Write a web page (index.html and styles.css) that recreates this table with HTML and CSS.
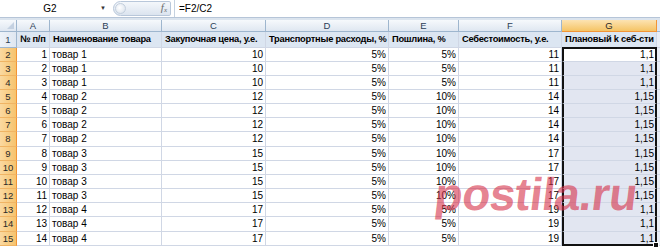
FILE: index.html
```html
<!DOCTYPE html>
<html>
<head>
<meta charset="utf-8">
<link rel="stylesheet" href="styles.css">
</head>
<body>
<div class="app">
  <div class="fbar">
    <div class="namebox">G2</div>
    <div class="ddarrow">▼</div>
    <div class="fxpill">
      <span class="knob"></span>
      <span class="fx"><i>f</i><sub>x</sub></span>
    </div>
    <div class="formula">=F2/C2</div>
  </div>
  <div class="band"></div>
  <div class="sheet">
    <div class="corner"><span class="tri"></span></div>
    <div class="ch">A</div><div class="ch">B</div><div class="ch">C</div><div class="ch">D</div><div class="ch">E</div><div class="ch">F</div><div class="ch ch-sel">G</div><div class="ch-end"></div>

    <div class="rh rh1">1</div>
    <div class="c hd">№ п/п</div><div class="c hd">Наименование товара</div><div class="c hd">Закупочная цена, у.е.</div><div class="c hd">Транспортные расходы, %</div><div class="c hd">Пошлина, %</div><div class="c hd">Себестоимость, у.е.</div><div class="c hd">Плановый k себ-сти</div><div class="c-end c-end1"></div>
  </div>
  <div class="sheet" id="rows"></div>
  <div class="watermark">postila.ru</div>
</div>
<script src="app.js"></script>
</body>
</html>
```
FILE: app.js
```js
const B = ["товар 1","товар 1","товар 1","товар 2","товар 2","товар 2","товар 2","товар 3","товар 3","товар 3","товар 3","товар 4","товар 4","товар 4"];
const C = [10,10,10,12,12,12,12,15,15,15,15,17,17,17];
const E = ["5%","5%","5%","10%","10%","10%","10%","10%","10%","10%","10%","5%","5%","5%"];
const F = [11,11,11,14,14,14,14,17,17,17,17,19,19,19];
const G = ["1,1","1,1","1,1","1,15","1,15","1,15","1,15","1,15","1,15","1,15","1,15","1,1","1,1","1,1"];
const rows = document.getElementById("rows");
let html = "";
for (let i = 0; i < 14; i++) {
  const tall = (i === 6 || i === 12) ? " tall" : "";
  let gcls = "c n g" + tall;
  if (i === 0) gcls += " active first";
  if (i === 13) gcls += " last";
  html += `<div class="rh rh-sel${tall}">${i + 2}</div>` +
    `<div class="c n${tall}">${i + 1}</div>` +
    `<div class="c${tall}">${B[i]}</div>` +
    `<div class="c n${tall}">${C[i]}</div>` +
    `<div class="c n${tall}">5%</div>` +
    `<div class="c n${tall}">${E[i]}</div>` +
    `<div class="c n${tall}">${F[i]}</div>` +
    `<div class="${gcls}">${G[i]}${i === 13 ? '<span class="handle"></span>' : ''}</div>` +
    `<div class="c-end${tall}"></div>`;
}
rows.innerHTML = html;
```
FILE: styles.css
```css
html, body { margin: 0; padding: 0; background: #fff; }
body { font-family: "Liberation Sans", Arial, sans-serif; font-size: 10px; color: #000; }
.app { position: relative; width: 660px; height: 250px; overflow: hidden; }

.fbar { display: flex; align-items: stretch; height: 17px; background: #fff; }
.namebox { width: 100px; text-align: center; line-height: 17px; font-size: 10px; color: #000; }
.ddarrow { width: 10px; font-size: 6px; line-height: 17px; color: #333; }
.fxpill { width: 58px; margin: 1px 0 1px 3px; height: 15px; border-radius: 8px 2px 2px 8px;
  background: linear-gradient(#f4f7fb, #dbe4ef); border: 1px solid #b8c7da; box-sizing: border-box;
  display: flex; align-items: center; justify-content: space-between; padding: 0 3px 0 1px; }
.knob { width: 11px; height: 11px; border-radius: 50%; background: radial-gradient(circle at 40% 40%, #fff, #d6dfea); border: 1px solid #c3cfdd; box-sizing: border-box; }
.fx { font-family: "Liberation Serif", serif; font-size: 11px; color: #6b6b6b; line-height: 11px; }
.fx sub { font-size: 7px; font-style: italic; vertical-align: -1px; }
.formula { flex: 1; border-left: 1px solid #c6d2e0; margin-left: 3px; padding-left: 4px; line-height: 17px; font-size: 10px; }

.band { height: 3px; background: #dbe4ee; border-top: 1px solid #b6c5d8; box-sizing: border-box; }

.sheet { display: grid; grid-template-columns: 17px 33px 112px 104px 123px 70px 103px 95px 3px; }
.corner, .ch, .ch-end { height: 12px; box-sizing: border-box; background: linear-gradient(#f6f9fc, #dfe7f1); border-right: 1px solid #9eb6ce; border-bottom: 1px solid #9eb6ce; color: #2c3e57; text-align: center; line-height: 11px; font-size: 9.5px; }
.corner { position: relative; }
.tri { position: absolute; right: 2px; bottom: 2px; width: 0; height: 0; border-left: 7px solid transparent; border-bottom: 7px solid #c4d1e1; }
.ch-sel { background: linear-gradient(#fce3b2, #f5c465); border-right-color: #f29536; border-bottom-color: #f29536; color: #2a2a2a; }
.ch-end { border-right: 0; background: #dfe7f1; }

.rh { height: 14px; box-sizing: border-box; background: linear-gradient(90deg, #eef3f9, #dfe7f1); border-right: 1px solid #9eb6ce; border-bottom: 1px solid #9eb6ce; text-align: center; line-height: 13px; color: #2c3e57; font-size: 9.5px; }
.rh1 { height: 16px; line-height: 15px; }
.rh-sel { background: linear-gradient(90deg, #fbd9a0, #f6c36d); border-right-color: #f29536; border-bottom-color: #f0b464; color: #2a2a2a; }

.c { height: 14px; box-sizing: border-box; border-right: 1px solid #d0d7e5; border-bottom: 1px solid #d0d7e5; padding: 0 2px; line-height: 13px; white-space: nowrap; overflow: hidden; }
.hd { height: 16px; line-height: 15px; font-weight: bold; background: #dce6f2; font-size: 9.3px; letter-spacing: -0.25px; padding: 0 1px 0 3px; overflow: visible; }
.c-end { height: 14px; background: #e9eef5; border-bottom: 1px solid #d0d7e5; box-sizing: border-box; }
.c-end1 { height: 16px; }
.rh.tall, .c.tall, .c-end.tall { height: 15px; line-height: 14px; }
.n { text-align: right; }
.g { background: #e2e6f1; border-left: 2px solid #111; border-right: 2px solid #111; padding-right: 1px; overflow: visible; }
.g.active { background: #fff; }
.g.first { border-top: 2px solid #111; margin-top: -1px; height: 15px; line-height: 12px; }
.g.last { border-bottom: 2px solid #111; position: relative; }
.handle { position: absolute; right: -4px; bottom: -4px; width: 4px; height: 4px; background: #111; border: 1px solid #fff; }

.watermark { position: absolute; left: 435px; top: 167px; font-family: "Liberation Sans", Arial, sans-serif; font-weight: bold; font-size: 46px; color: rgba(214, 48, 72, 0.62); transform: skewX(-7deg); letter-spacing: -0.5px; pointer-events: none; }
```
